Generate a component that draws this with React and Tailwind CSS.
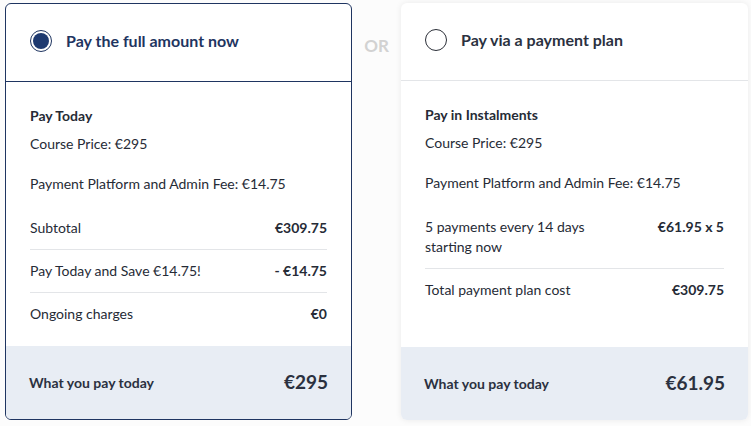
import { useState } from 'react';

const FONT = { fontFamily: 'Lato, "Open Sans", "Liberation Sans", sans-serif' };

function Radio({ checked }) {
  return (
    <span
      className={`w-[22px] h-[22px] rounded-full flex items-center justify-center shrink-0 border ${
        checked ? 'border-[#1f3561]' : 'border-[#2b2f38]'
      }`}
    >
      {checked && <span className="w-[16px] h-[16px] rounded-full bg-[#1e3a70]" />}
    </span>
  );
}

function Row({ label, value }) {
  return (
    <div className="flex justify-between items-start leading-[20px]">
      <span>{label}</span>
      <span className="font-bold">{value}</span>
    </div>
  );
}

function Card({ selected, title, onSelect, heading, children, total }) {
  return (
    <div
      className={`w-[347px] h-[417px] rounded-md flex flex-col overflow-hidden bg-white ${
        selected ? 'border border-[#1f3561]' : 'shadow-[0_0_6px_rgba(0,0,0,0.08)]'
      }`}
    >
      <button
        onClick={onSelect}
        className={`h-[78px] flex items-center gap-[14px] pl-[24px] pb-[4px] text-left border-b ${
          selected ? 'border-[#1f3561] text-[#1f3561]' : 'border-[#e3e5e8] text-[#2b3140]'
        }`}
      >
        <Radio checked={selected} />
        <span className="text-[16px] font-bold">{heading}</span>
      </button>
      <div className="px-[24px] pt-[24px] text-[14px] text-[#262b36] flex flex-col">
        <div className="font-bold leading-[20px]">{title}</div>
        {children}
      </div>
      <div className="mt-auto h-[73px] bg-[#e8edf4] flex items-center justify-between px-[23px] text-[#2b3140]">
        <span className="text-[14px] font-bold">What you pay today</span>
        <span className="text-[19px] font-bold">{total}</span>
      </div>
    </div>
  );
}

export default function App() {
  const [plan, setPlan] = useState('full');

  return (
    <div className="min-h-screen bg-[#fcfcfc] pt-[3px] pl-[5px] flex" style={FONT}>
      <Card
        selected={plan === 'full'}
        onSelect={() => setPlan('full')}
        heading="Pay the full amount now"
        title="Pay Today"
        total="€295"
      >
        <div className="mt-[8px] leading-[20px]">Course Price: €295</div>
        <div className="mt-[20px] leading-[20px]">Payment Platform and Admin Fee: €14.75</div>
        <div className="mt-[24px] pb-[11px]"><Row label="Subtotal" value="€309.75" /></div>
        <div className="border-t border-[#e3e5e8] py-[11px]"><Row label="Pay Today and Save €14.75!" value="- €14.75" /></div>
        <div className="border-t border-[#e3e5e8] py-[11px]"><Row label="Ongoing charges" value="€0" /></div>
      </Card>

      <div className="w-[49px] flex justify-center pt-[30px] text-[17px] font-bold text-[#d2d2d2]">OR</div>

      <Card
        selected={plan === 'plan'}
        onSelect={() => setPlan('plan')}
        heading="Pay via a payment plan"
        title="Pay in Instalments"
        total="€61.95"
      >
        <div className="mt-[8px] leading-[20px]">Course Price: €295</div>
        <div className="mt-[20px] leading-[20px]">Payment Platform and Admin Fee: €14.75</div>
        <div className="mt-[24px] pb-[11px] leading-[20px]">
          <div className="flex justify-between items-start">
            <span>5 payments every 14 days<br />starting now</span>
            <span className="font-bold">€61.95 x 5</span>
          </div>
        </div>
        <div className="border-t border-[#e3e5e8] py-[11px]"><Row label="Total payment plan cost" value="€309.75" /></div>
      </Card>
    </div>
  );
}
